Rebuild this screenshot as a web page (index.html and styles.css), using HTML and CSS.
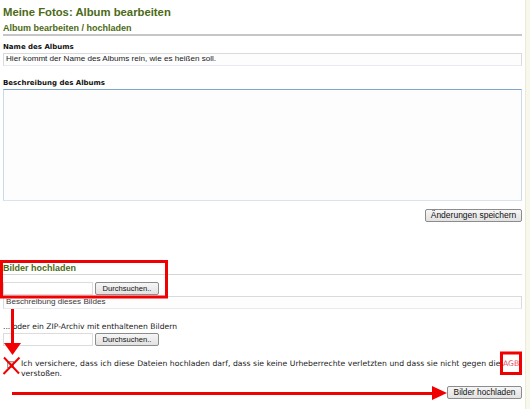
FILE: index.html
```html
<!DOCTYPE html>
<html lang="de">
<head>
<meta charset="utf-8">
<title>Meine Fotos: Album bearbeiten</title>
<link rel="stylesheet" href="styles.css">
</head>
<body>
<div class="page">
  <main class="content">
    <h1 class="title">Meine Fotos: Album bearbeiten</h1>
    <h2 class="section">Album bearbeiten / hochladen</h2>

    <label class="label">Name des Albums</label>
    <div class="field name-field">Hier kommt der Name des Albums rein, wie es heißen soll.</div>

    <label class="label label-desc">Beschreibung des Albums</label>
    <div class="textarea"></div>

    <div class="actions actions-save"><button class="btn btn-save">Änderungen speichern</button></div>

    <h2 class="section section-upload">Bilder hochladen</h2>
    <div class="file-row file-row-first">
      <span class="file-input"></span><button class="btn btn-browse">Durchsuchen..</button>
    </div>
    <div class="field desc-field">Beschreibung dieses Bildes</div>

    <p class="zip">... oder ein ZIP-Archiv mit enthaltenen Bildern</p>
    <div class="file-row">
      <span class="file-input"></span><button class="btn btn-browse">Durchsuchen..</button>
    </div>

    <div class="agree">
      <span class="checkbox"></span>
      <p class="agree-text">Ich versichere, dass ich diese Dateien hochladen darf, dass sie keine Urheberrechte verletzten und dass sie nicht gegen die <a class="agb">AGB</a> verstoßen.</p>
    </div>

    <div class="actions actions-upload"><button class="btn btn-upload">Bilder hochladen</button></div>
  </main>
  <div class="rail"></div>

  <svg class="marks" width="530" height="409" viewBox="0 0 530 409" aria-hidden="true">
    <rect x="1.5" y="261.5" width="165" height="35.5" fill="none" stroke="#f00000" stroke-width="3"/>
    <line x1="12.5" y1="309" x2="12.5" y2="344" stroke="#f00000" stroke-width="3"/>
    <polygon points="4,343 21,343 12.5,355" fill="#f00000"/>
    <line x1="4" y1="357.5" x2="19" y2="373.5" stroke="#f00000" stroke-width="2"/>
    <line x1="19.5" y1="357.5" x2="3.5" y2="374" stroke="#f00000" stroke-width="2"/>
    <rect x="501.5" y="353" width="19" height="20.5" fill="none" stroke="#f00000" stroke-width="3"/>
    <line x1="12" y1="393.5" x2="433" y2="393.5" stroke="#f00000" stroke-width="3"/>
    <polygon points="432,386 432,400 447,393" fill="#f00000"/>
  </svg>
</div>
</body>
</html>
```

FILE: styles.css
```css
html, body {
  margin: 0;
  padding: 0;
  background: #ffffff;
}

.page {
  position: relative;
  width: 530px;
  height: 409px;
  display: flex;
  overflow: hidden;
}

.content {
  width: 519px;
  padding-left: 3px;
  display: flex;
  flex-direction: column;
  font-family: "Liberation Sans", Arial, sans-serif;
  color: #111;
}

.rail {
  margin-left: 3px;
  width: 5px;
  background: #f7f7ec;
  border-left: 1px solid #ecebd8;
  box-sizing: border-box;
}

.title {
  margin: 4px 0 0;
  font-size: 11.3px;
  line-height: 16px;
  font-weight: bold;
  color: #4b6a16;
}

.section {
  margin: 3px 0 0;
  font-size: 9px;
  line-height: 11px;
  font-weight: bold;
  color: #4b6a16;
  border-bottom: 2px solid #c6c6c6;
}

.label {
  display: block;
  margin-top: 6px;
  font-family: "DejaVu Sans", Verdana, sans-serif;
  font-weight: bold;
  font-size: 7px;
  line-height: 10px;
  color: #111;
}

.label-desc {
  margin-top: 12px;
}

.field {
  margin-top: 1px;
  height: 13px;
  box-sizing: border-box;
  border: 1px solid #dadada;
  border-bottom-color: #e9e9ef;
  background: #fdfdfd;
  padding: 0 0 1px 2px;
  font-size: 8.1px;
  line-height: 10px;
  color: #1a1a1a;
  white-space: nowrap;
}

.textarea {
  margin-top: 1px;
  height: 112px;
  box-sizing: border-box;
  border: 1px solid #c9d9e8;
  border-top-color: #7ea6cf;
  border-bottom-color: #d9e4ee;
  background: #fdfdfd;
}

.actions {
  display: flex;
  justify-content: flex-end;
}

.actions-save {
  margin-top: 8px;
}

.btn {
  margin: 0;
  height: 13px;
  box-sizing: border-box;
  padding: 0;
  border: 1px solid #8c8c8c;
  border-radius: 2px;
  background: linear-gradient(#f6f6f6, #e2e2e2);
  font-family: "Liberation Sans", Arial, sans-serif;
  font-size: 8.5px;
  line-height: 11px;
  color: #111;
  white-space: nowrap;
  text-align: center;
}

.btn-save {
  width: 97px;
}

.section-upload {
  margin-top: 41px;
  border-bottom: 1px solid #d6d6d6;
}

.file-row {
  display: flex;
  gap: 2px;
  margin-top: 1px;
  height: 13px;
}

.file-row-first {
  margin-top: 7px;
}

.file-input {
  width: 90px;
  height: 13px;
  box-sizing: border-box;
  border: 1px solid #dcdcdc;
  background: #ffffff;
}

.btn-browse {
  width: 64px;
  font-size: 7.6px;
}

.desc-field {
  color: #3a3a3a;
}

.zip {
  margin: 13px 0 0;
  font-family: "DejaVu Sans", Verdana, sans-serif;
  font-size: 7.6px;
  line-height: 10px;
  color: #1a1a1a;
}

.agree {
  margin-top: 13px;
  display: flex;
  align-items: flex-start;
}

.checkbox {
  margin: 2px 7px 0 4px;
  width: 7px;
  height: 7px;
  flex: none;
  box-sizing: border-box;
  border: 1px solid #9a9a9a;
  background: linear-gradient(#c8c8c8, #e8e8e8);
}

.agree-text {
  margin: 0;
  flex: 1;
  font-family: "DejaVu Sans", Verdana, sans-serif;
  font-size: 7.7px;
  line-height: 10px;
  word-spacing: 0.14px;
  color: #1a1a1a;
}

.agb {
  color: #e0505c;
}

.actions-upload {
  margin-top: 7px;
}

.btn-upload {
  width: 75px;
  font-size: 8.3px;
}

.marks {
  position: absolute;
  left: 0;
  top: 0;
  pointer-events: none;
}
```
